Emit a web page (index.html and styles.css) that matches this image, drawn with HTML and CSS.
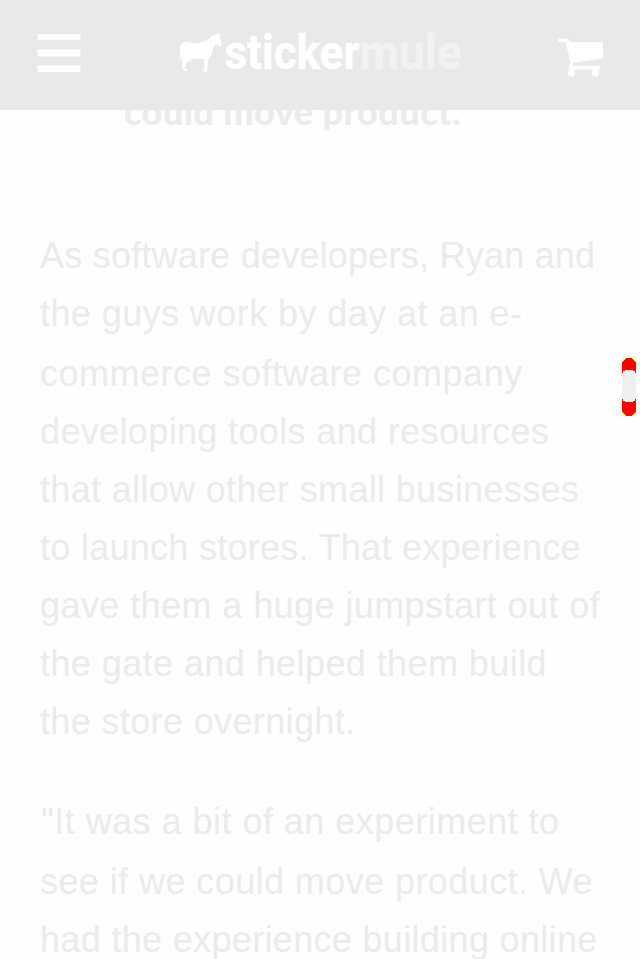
FILE: index.html
```html
<!DOCTYPE html>
<html lang="en">
<head>
<meta charset="utf-8">
<title>Sticker Mule</title>
<link rel="stylesheet" href="styles.css">
</head>
<body>
<header class="bar">
  <svg class="menu" viewBox="0 0 44 40"><path d="M.5 1h43v6H.5zM.5 16.500h43v7H.5zM.5 32.500h43v6.500H.5z"/></svg>
  <svg class="logo" viewBox="0 0 284 48">
    <path d="M1 15Q1 10.500 5 9.500Q8 8.500 12 10Q17 11 22 9L27 8Q31 5 34 2.500L37.500 1.500L38.500 0L39.500 2L41 0L40.700 3.500Q41 6 42.500 10L43 12.500L41 14L39 12L36.500 11.500Q34 15 33.500 19Q32.500 23 30 25L28.500 31L28 36L28.500 38.500H24.500L24.500 36L25.500 33L24.500 26Q20 26.500 14.500 25Q12.500 28 8 29L7 32L6.500 35L9 38H5.500L3.500 36L3 31L3.500 25L2.500 22L2 28Q.5 25 1.300 21Z"/>
    <text x="45.500" y="36"><tspan textLength="135" lengthAdjust="spacingAndGlyphs">sticker</tspan><tspan class="mule" textLength="102" lengthAdjust="spacingAndGlyphs">mule</tspan></text>
  </svg>
  <svg class="cart" viewBox="0 0 46 40"><path d="M1.500 .8H9q1.500 0 1.700 1.200l.5 2H42.500Q45 4 45 6V19q0 1.700-2 2L15.500 24.500l-.7 3.300H40.500a1.700 1.700 0 0 1 0 3.600H12.500q-2.300-.7-1.500-3l1.700-3.400L7.500 4H1.500a1.600 1.600 0 0 1 0-3.200Z"/><circle cx="13.500" cy="35" r="3.700"/><circle cx="37.500" cy="35" r="3.700"/></svg>
</header>
<main>
  <h1>could move product.</h1>
  <p><span class="s2">As software developers, Ryan and</span><span class="tall s4">the guys work by day at an e-</span><span class="s5">commerce software company</span><span class="s35">developing tools and resources</span><span class="s3">that allow other small businesses</span><span class="s27">to launch stores. That experience</span><span class="s4">gave them a huge jumpstart out of</span><span class="s4">the gate and helped them build</span><span class="s35">the store overnight.</span></p>
  <p><span class="tall quote">"It was a bit of an experiment to</span><span class="s4">see if we could move product. We</span><span class="s3">had the experience building online</span></p>
</main>
<svg class="thumb" viewBox="0 0 14 58" shape-rendering="crispEdges"><rect width="14" height="58" rx="5" fill="#ff0"/><rect width="14" height="58" rx="6.500" ry="7" fill="#f00"/><path d="M0 16l3-4h8l3 4v24l-3 4H3l-3-4Z" fill="#ff0"/><rect y="12" width="14" height="32" rx="5" fill="#f0f0f0"/></svg>
</body>
</html>
```
FILE: styles.css
```css
* { box-sizing: border-box; }
html { height: 959px; overflow: hidden; }
body {
  margin: 0;
  height: 959px;
  overflow: hidden;
  background: #fefefe;
  color: #ebebeb;
  font-family: "Liberation Sans", Arial, sans-serif;
}
.bar {
  position: relative;
  z-index: 1;
  display: flex;
  height: 110px;
  padding: 33px 36px 0 37px;
  background: #e9e9e9;
  fill: #fff;
}
.menu { width: 44px; height: 40px; }
.logo { width: 284px; height: 48px; margin-left: 98px; overflow: visible; }
.logo text { font: 700 49px Roboto, sans-serif; stroke: #fff; stroke-width: .5px; }
.logo .mule { fill: #f2f2f2; stroke: #f2f2f2; }
.cart { width: 46px; height: 40px; margin: 5px 0 0 auto; }
main { padding-left: 40px; }
h1 {
  margin: -24px 0 0 84px;
  height: 50px;
  font: 900 36px/50px Lato, sans-serif;
  letter-spacing: .45px;
  white-space: nowrap;
}
p { margin: 0 0 42px; font-size: 36px; line-height: 58px; }
h1 + p { margin-top: 91px; }
p span { display: block; height: 58px; white-space: nowrap; }
p .tall { height: 60px; }
.s2 { letter-spacing: .22px; }
.s27 { letter-spacing: .28px; }
.s3 { letter-spacing: .33px; }
.s35 { letter-spacing: .36px; }
.s4 { letter-spacing: .42px; }
.s5 { letter-spacing: .5px; }
.quote { padding-left: 1px; letter-spacing: .47px; }
.thumb { position: absolute; left: 622px; top: 358px; width: 14px; height: 58px; }
```
